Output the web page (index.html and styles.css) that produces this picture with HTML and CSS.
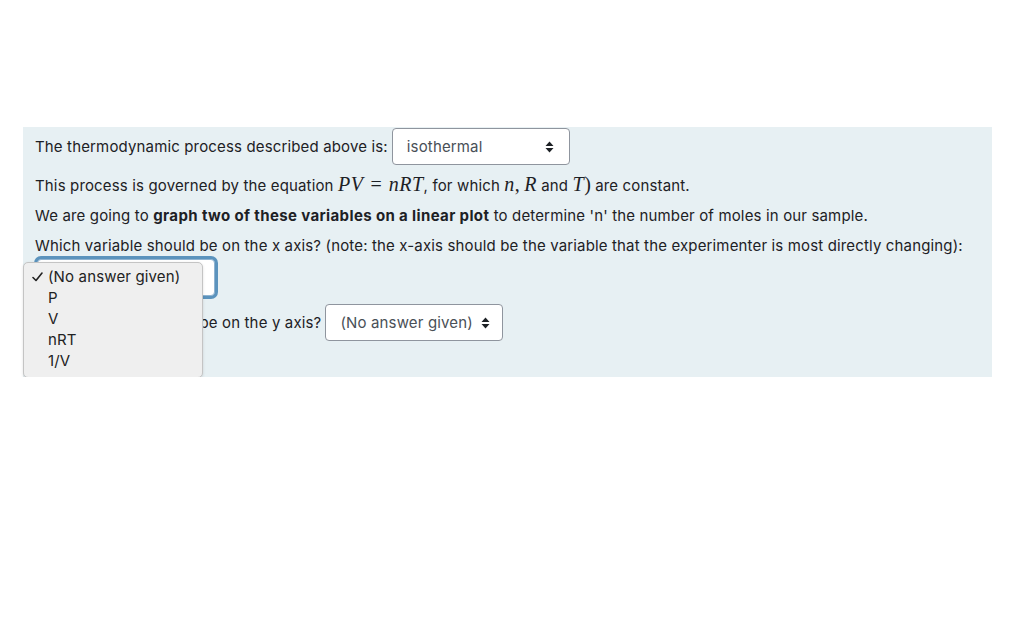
FILE: index.html
```html
<!DOCTYPE html>
<html>
<head>
<meta charset="utf-8">
<link rel="stylesheet" href="styles.css">
</head>
<body>
<div class="formulation">
  <div class="row first">
    <span>The thermodynamic process described above is:</span>
    <div class="select">
      <span>isothermal</span>
      <svg class="arrows" width="9" height="12" viewBox="0 0 9 12"><path d="M4.5 0.5 L8.5 5 H0.5 Z M0.5 7 H8.5 L4.5 11.5 Z" fill="#1d2125"/></svg>
    </div>
  </div>
  <p class="line">This process is governed by the equation <span class="math"><i>PV</i><span class="eq">=</span><i>nRT</i></span>, for which <span class="math"><i>n</i>,</span> <span class="math"><i>R</i></span> and <span class="math"><i>T</i>)</span> are constant.</p>
  <p class="line">We are going to <b>graph two of these variables on a linear plot</b> to determine 'n' the number of moles in our sample.</p>
  <p class="line">Which variable should be on the x axis? (note: the x-axis should be the variable that the experimenter is most directly changing):</p>
  <div class="xwrap">
    <div class="select focused">
      <span>(No answer given)</span>
      <svg class="arrows" width="9" height="12" viewBox="0 0 9 12"><path d="M4.5 0.5 L8.5 5 H0.5 Z M0.5 7 H8.5 L4.5 11.5 Z" fill="#1d2125"/></svg>
    </div>
    <ul class="menu">
      <li><svg class="check" width="11" height="10" viewBox="0 0 11 10"><path d="M1 5.5 L4 8.5 L10 1" fill="none" stroke="#222" stroke-width="1.6" stroke-linecap="round" stroke-linejoin="round"/></svg>(No answer given)</li>
      <li>P</li>
      <li>V</li>
      <li>nRT</li>
      <li>1/V</li>
    </ul>
  </div>
  <div class="row yrow">
    <span>Which variable should be on the y axis?</span>
    <div class="select">
      <span>(No answer given)</span>
      <svg class="arrows" width="9" height="12" viewBox="0 0 9 12"><path d="M4.5 0.5 L8.5 5 H0.5 Z M0.5 7 H8.5 L4.5 11.5 Z" fill="#1d2125"/></svg>
    </div>
  </div>
</div>
</body>
</html>
```

FILE: styles.css
```css
html, body {
  margin: 0;
  padding: 0;
  background: #ffffff;
}
body {
  font-family: Inter, "Liberation Sans", Arial, sans-serif;
  font-size: 15px;
  letter-spacing: 0.15px;
  color: #1d2125;
}
.formulation {
  margin: 127px 32px 0 23px;
  height: 250px;
  box-sizing: border-box;
  background: #e7f0f3;
  padding: 1px 12px 0 12px;
}
.row {
  display: flex;
  align-items: center;
  gap: 4px;
}
.select {
  display: flex;
  align-items: center;
  justify-content: space-between;
  box-sizing: border-box;
  width: 178px;
  height: 37px;
  padding: 0 15px 0 14px;
  border: 1px solid #8f959e;
  border-radius: 4px;
  background: #fff;
  color: #495057;
  white-space: nowrap;
}
.yrow .select {
  padding-right: 15px;
  gap: 8px;
}
.arrows {
  flex: none;
}
.line {
  margin: 8px 0 0 0;
  line-height: 22px;
}
.first + .line {
  margin-top: 9px;
}
.math {
  font-family: "Liberation Serif", "Times New Roman", serif;
  font-size: 20px;
  letter-spacing: 0;
  line-height: 1;
}
.math i {
  font-style: italic;
  letter-spacing: 0.5px;
}
.eq {
  padding: 0 7px;
}
b {
  font-weight: bold;
  letter-spacing: 0.37px;
}
.xwrap {
  position: relative;
  margin-top: 2px;
  height: 37px;
}
.select.focused {
  margin-left: 2px;
  border-color: #8fb3d0;
  box-shadow: 0 0 0 3px #5b93bd;
}
.menu {
  position: absolute;
  left: -12px;
  top: 3px;
  width: 180px;
  height: 116px;
  box-sizing: border-box;
  margin: 0;
  padding: 3px 0 0 0;
  list-style: none;
  background: #efefef;
  border: 1px solid #c4c4c4;
  border-radius: 5px;
  box-shadow: 0 1px 3px rgba(0,0,0,0.12);
  color: #222;
  z-index: 2;
}
.menu li {
  height: 21px;
  line-height: 21px;
  padding-left: 24px;
  position: relative;
}
.check {
  position: absolute;
  left: 8px;
  top: 6px;
}
.yrow {
  margin-top: 8px;
}
```
